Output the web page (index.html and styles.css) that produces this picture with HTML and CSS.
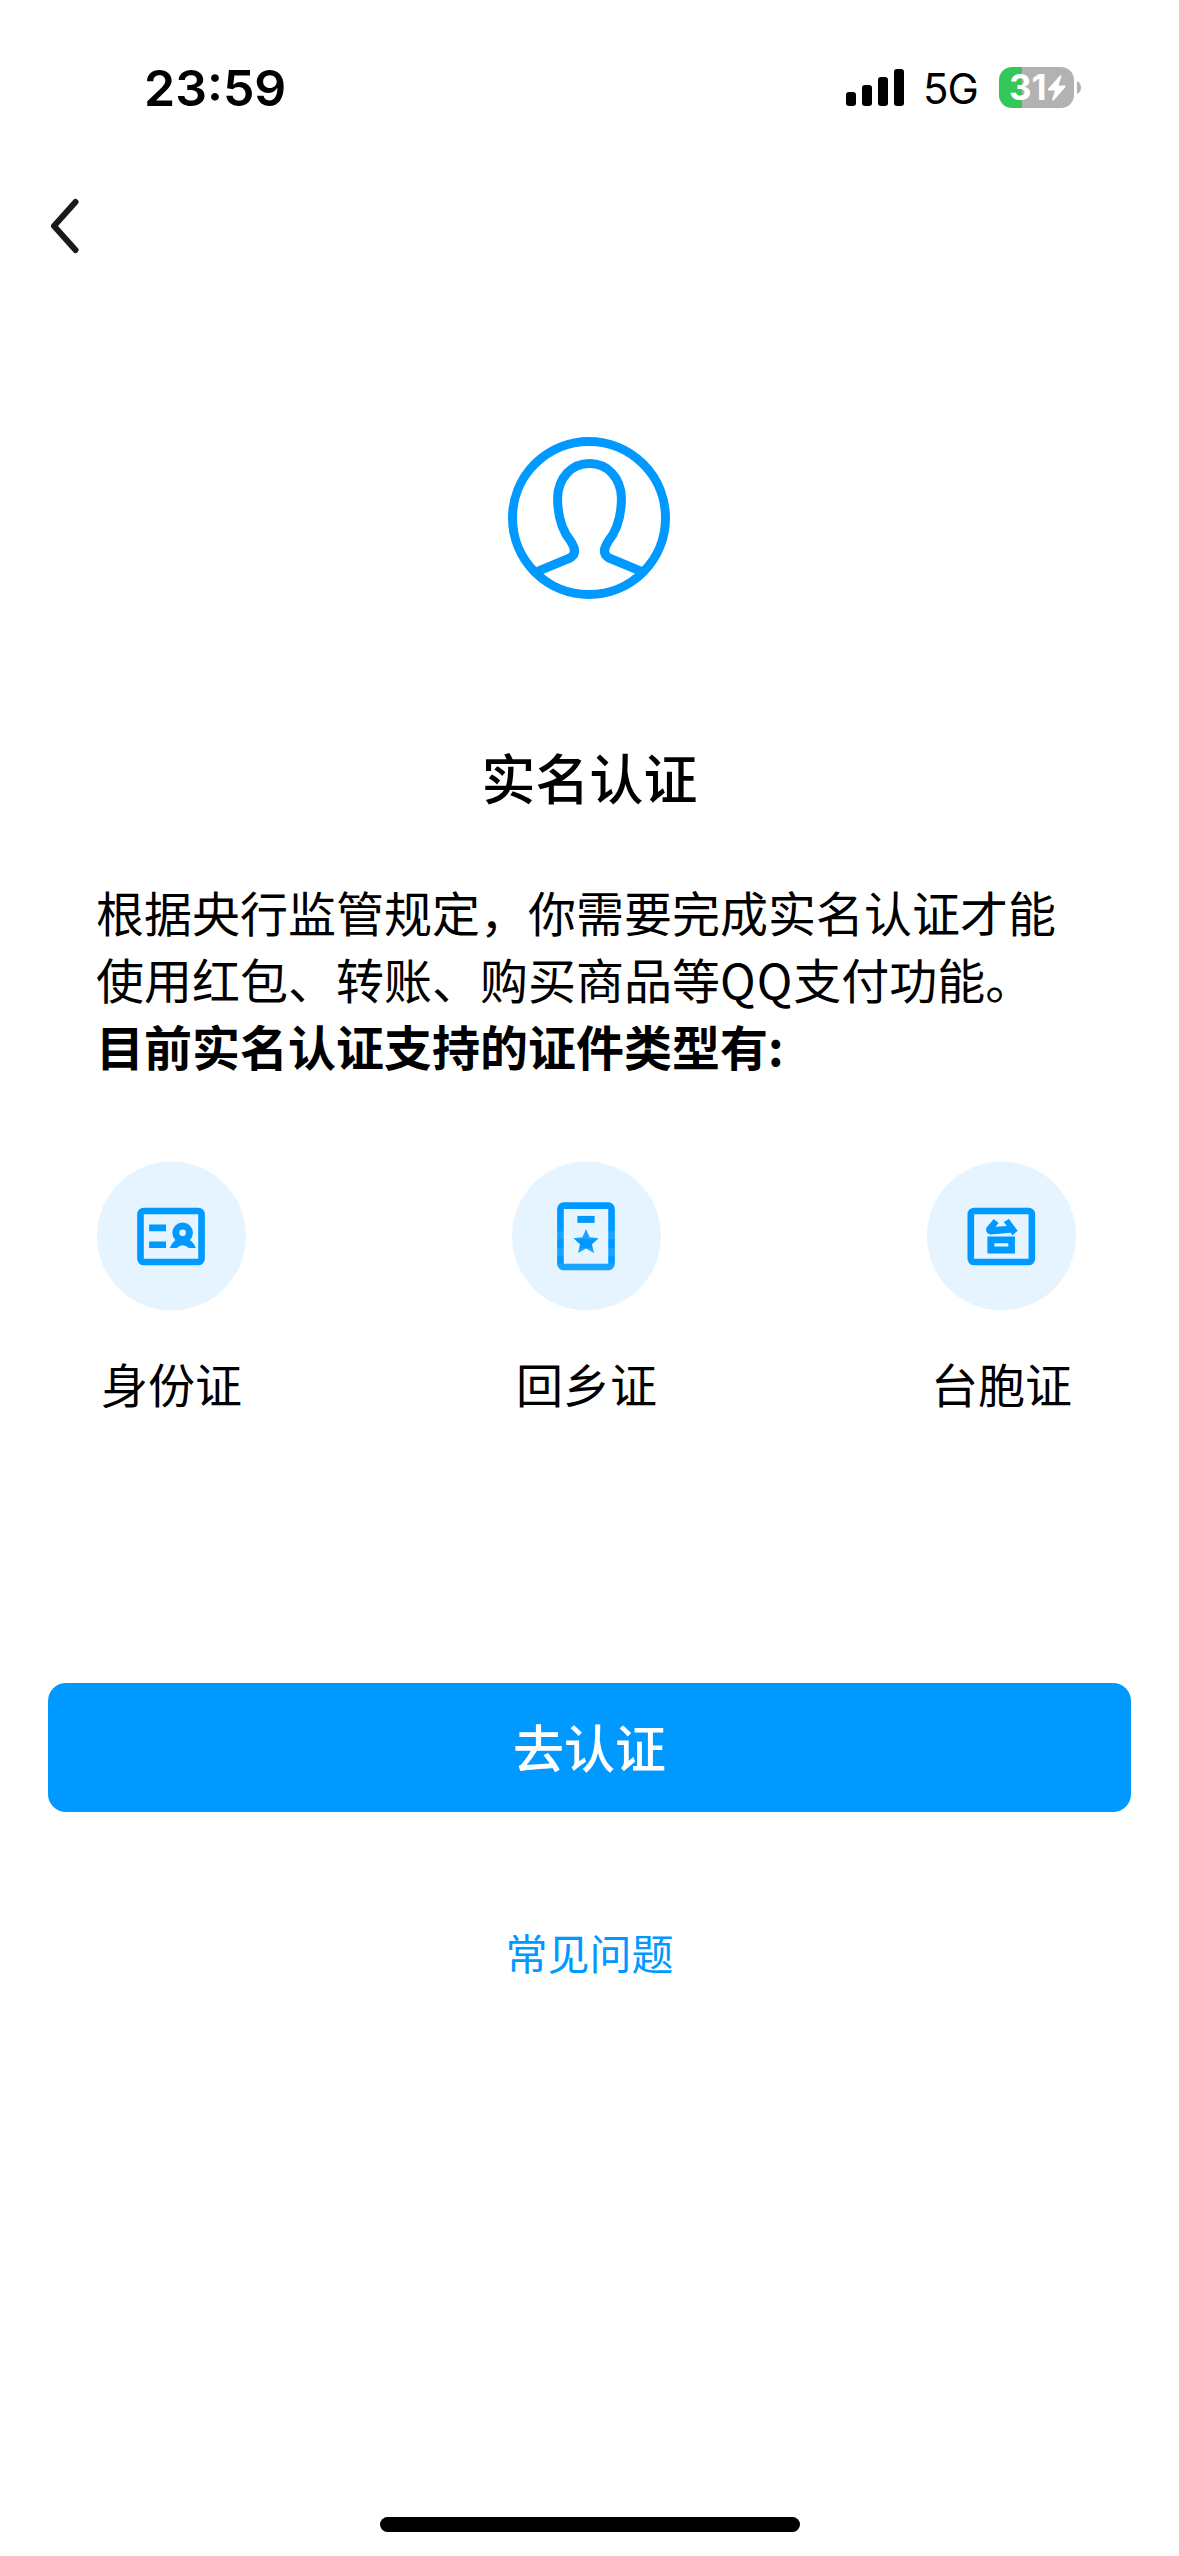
FILE: index.html
```html
<!DOCTYPE html>
<html lang="zh-CN">
<head>
  <meta charset="UTF-8">
  <meta name="viewport" content="width=device-width, initial-scale=1.0">
  <title>实名认证</title>
  <link rel="stylesheet" href="styles.css">
</head>
<body>
  <div class="status-bar">
    <span class="time">23:59</span>
    <div class="status-right">
      <svg class="signal" viewBox="0 0 58 37">
        <rect x="0" y="23" width="10" height="14" rx="3"/>
        <rect x="16" y="16" width="10" height="21" rx="3"/>
        <rect x="32" y="8" width="10" height="29" rx="3"/>
        <rect x="48" y="0" width="10" height="37" rx="3"/>
      </svg>
      <span class="network">5G</span>
      <div class="battery">
        <span class="level">31</span>
        <svg class="bolt" viewBox="0 0 20 26"><path d="M13 0.5 L1 14 Q0.5 15.5 2 15.5 L8 15.5 L5 25 Q5.5 26 7 25 L18.5 12 Q19 10.5 17.5 10.5 L11.5 10.5 L14.5 1 Q14 0 13 0.5Z"/></svg>
      </div>
      <svg class="battery-tip" viewBox="0 0 4 13"><path d="M0 0 Q4 2 4 6.5 Q4 11 0 13Z"/></svg>
    </div>
  </div>

  <div class="nav">
    <svg class="back" viewBox="0 0 30 56"><path d="M25.5 4 L4 28 L25.5 52"/></svg>
  </div>

  <div class="content">
    <svg class="avatar" viewBox="0 0 487 487">
      <circle cx="243.5" cy="243.5" r="230"/>
      <path d="M82 407 L188 363 Q211 348 189 314 Q149 265 149 183 C151 122 191 80 245 80 C299 80 339 122 341 183 Q341 265 301 314 Q279 348 302 363 L408 407"/>
    </svg>

    <h1>实名认证</h1>

    <p class="desc">根据央行监管规定，你需要完成实名认证才能<br>使用红包、转账、购买商品等<span class="latin">QQ</span>支付功能。<br><b>目前实名认证支持的证件类型有:</b></p>

    <div class="cards">
      <div class="card">
        <svg class="card-icon" viewBox="0 0 449 449">
          <circle class="bg" cx="224.5" cy="224.5" r="224.5"/>
          <rect class="frame" x="131" y="149" width="184" height="154" rx="10"/>
          <path d="M157 190h51v20h-51zM157 241h51v20h-51z"/>
          <circle class="ring" cx="258" cy="215" r="20.5"/>
          <path d="M219 261 Q226 243 240 234 L276 234 Q292 243 298 261 L277 261 Q258 243 240 261Z"/>
        </svg>
        <span>身份证</span>
      </div>
      <div class="card">
        <svg class="card-icon" viewBox="0 0 449 449">
          <circle class="bg" cx="224.5" cy="224.5" r="224.5"/>
          <rect class="frame" x="146" y="133" width="154" height="185" rx="10"/>
          <path d="M197 164h52v21h-52z"/>
          <path d="M223 204 L234 228 L261 231 L241 249 L247 276 L223 262 L199 276 L205 249 L185 231 L212 228Z"/>
          <path class="shade" d="M136 210h174v24h-174zM136 260h174v24h-174zM136 307h174v21h-174z"/>
        </svg>
        <span>回乡证</span>
      </div>
      <div class="card">
        <svg class="card-icon" viewBox="0 0 449 449">
          <circle class="bg" cx="224.5" cy="224.5" r="224.5"/>
          <rect class="frame" x="132" y="149" width="184" height="154" rx="10"/>
          <path fill-rule="evenodd" d="M182 226h83v51h-83zM203 246v10h42v-10z"/>
          <path d="M201 173 L216 185 L206 197 L241 194 L231 182 L247 173 L273 209 L257 223 L253 215 L191 220 Q174 216 179 200Z"/>
        </svg>
        <span>台胞证</span>
      </div>
    </div>

    <button class="btn">去认证</button>
    <a class="faq">常见问题</a>
  </div>

  <div class="home-bar"></div>
</body>
</html>
```
FILE: styles.css
```css
* {
  box-sizing: border-box;
}
body {
  margin: 0;
  height: 2556px;
  display: flex;
  flex-direction: column;
  background: #fff;
  color: #000;
  font-family: "Noto Sans CJK SC", sans-serif;
}
.status-bar {
  height: 175px;
  padding: 0 98px 0 144px;
  display: flex;
  justify-content: space-between;
  align-items: center;
  font-family: Inter, sans-serif;
}
.time {
  font-size: 50px;
  font-weight: 600;
}
.status-right {
  display: flex;
  align-items: center;
}
.signal {
  width: 58px;
  height: 37px;
}
.network {
  width: 56px;
  margin: 2px 20px 0 19px;
  font-size: 42px;
  letter-spacing: -1px;
}
.battery {
  width: 75px;
  height: 41px;
  border-radius: 13px;
  padding-left: 10px;
  display: flex;
  align-items: center;
  background: linear-gradient(to right, #34c759 23px, #b2b2b2 23px);
}
.level {
  width: 38px;
  color: #fff;
  font-size: 35px;
  font-weight: 700;
  line-height: 41px;
}
.bolt {
  width: 20px;
  height: 26px;
  fill: #fff;
}
.battery-tip {
  width: 4px;
  height: 13px;
  margin-left: 3px;
  fill: #b2b2b2;
}
.nav {
  height: 101px;
  padding: 0 50px;
  display: flex;
  align-items: center;
}
.back {
  width: 30px;
  height: 56px;
  fill: none;
  stroke: #1a1a1a;
  stroke-width: 6;
  stroke-linecap: round;
  stroke-linejoin: round;
}
.content {
  flex: 1;
  padding-top: 161px;
  display: flex;
  flex-direction: column;
  align-items: center;
}
.avatar {
  width: 162px;
  height: 162px;
  margin-right: 1px;
  fill: none;
  stroke: #09f;
  stroke-width: 27;
  stroke-linejoin: round;
}
h1 {
  margin: 138px 0 0;
  font-size: 54px;
  font-weight: 500;
  line-height: 80px;
}
.desc {
  align-self: stretch;
  margin: 61px 90px 0 96px;
  font-size: 48px;
  line-height: 67.2px;
  white-space: nowrap;
}
.latin {
  letter-spacing: 1px;
}
.cards {
  align-self: stretch;
  margin: 81px 103px 0 97px;
  display: flex;
  justify-content: space-between;
}
.card {
  width: 149px;
  display: flex;
  flex-direction: column;
  align-items: center;
  font-size: 47px;
  line-height: 68px;
  white-space: nowrap;
}
.card-icon {
  width: 149px;
  height: 150px;
  margin-bottom: 38px;
  fill: #09f;
}
.bg {
  fill: #e5f4ff;
}
.frame {
  fill: none;
  stroke: #09f;
  stroke-width: 20;
}
.ring {
  fill: #e5f4ff;
  stroke: #09f;
  stroke-width: 21;
}
.shade {
  fill: #fff;
  opacity: 0.1;
}
.btn {
  width: 1083px;
  height: 129px;
  margin-top: 266px;
  padding: 0 0 3px;
  border: none;
  border-radius: 18px;
  background: #09f;
  color: #fff;
  font-family: inherit;
  font-size: 51px;
  font-weight: 500;
}
.faq {
  margin-top: 110px;
  color: #09f;
  font-size: 42px;
  line-height: 60px;
}
.home-bar {
  width: 420px;
  height: 15px;
  margin: 0 auto 24px;
  border-radius: 8px;
  background: #000;
}
```
